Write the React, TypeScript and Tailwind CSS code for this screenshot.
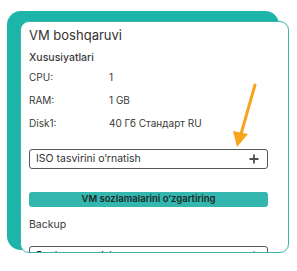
import React from "react";

function Plus() {
  return (
    <svg width="10" height="10" viewBox="0 0 10 10" className="shrink-0">
      <path d="M5 0.5V9.5M0.5 5H9.5" stroke="#4a4f52" strokeWidth="1.8" />
    </svg>
  );
}

export default function App() {
  const font = { fontFamily: "Inter, 'Noto Sans', sans-serif" };
  return (
    <div className="w-[297px] h-[271px] bg-white relative overflow-hidden" style={font}>
      <div className="absolute left-[7px] top-[11px] w-[272px] h-[239px] rounded-[14px] bg-[#1db5a9]" />
      <div className="relative ml-[20px] mt-[21px] w-[269px] h-[232px] rounded-[9px] border border-[#3ab4ae] bg-white overflow-hidden pl-[8px] pr-[20px] pt-[3px] text-[#333]">
        <div className="text-[13px] leading-[20px] text-[#333]">VM boshqaruvi</div>
        <div className="mt-[6px] text-[10.5px] leading-[14px] font-medium text-[#3a3a3a]">Xususiyatlari</div>
        <div className="mt-[5px] flex flex-col gap-[9px] text-[10px] leading-[14px] text-[#3a3a3a]">
          <div className="flex"><span className="w-[80px]">CPU:</span><span>1</span></div>
          <div className="flex"><span className="w-[80px]">RAM:</span><span>1 GB</span></div>
          <div className="flex"><span className="w-[80px]">Disk1:</span><span>40 Гб Стандарт RU</span></div>
        </div>
        <div className="mt-[19px] h-[20px] rounded-[3px] border border-[#55595c] flex items-center justify-between pl-[6px] pr-[8px]">
          <span className="text-[10.5px] text-[#333]">ISO tasvirini o&#8217;rnatish</span>
          <Plus />
        </div>
        <div className="mt-[23px] h-[15px] rounded-[3px] bg-[#33b6ad] flex items-center justify-center text-[9.5px] font-semibold text-[#1e2a2a]">
          VM sozlamalarini o&#8217;zgartiring
        </div>
        <div className="mt-[11px] text-[10.5px] leading-[14px] text-[#3a3a3a]">Backup</div>
        <div className="mt-[14px] h-[20px] rounded-[3px] border border-[#55595c] flex items-center justify-between pl-[6px] pr-[8px]">
          <span className="text-[10.5px] text-[#333]">Backup yaratish</span>
          <Plus />
        </div>
      </div>
      <svg className="absolute left-0 top-0 pointer-events-none" width="297" height="271">
        <line x1="255" y1="85" x2="241" y2="134" stroke="#f7a51c" strokeWidth="3" strokeLinecap="round" />
        <polygon points="233,131 248,134 237,147" fill="#f7a51c" />
      </svg>
    </div>
  );
}
